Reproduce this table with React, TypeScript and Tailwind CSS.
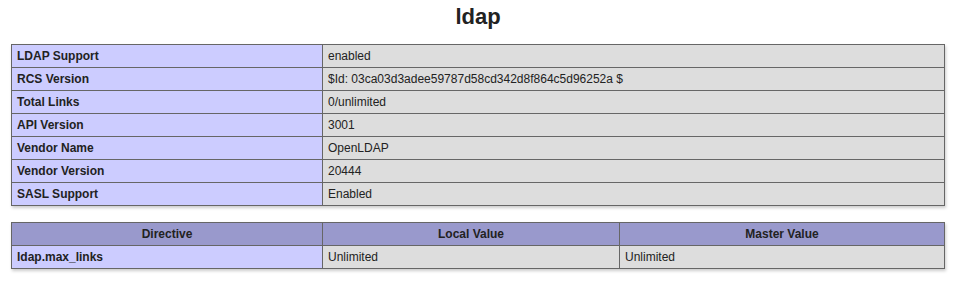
import React from 'react';

interface InfoRow {
  name: string;
  value: string;
}

const infoRows: InfoRow[] = [
  { name: 'LDAP Support', value: 'enabled' },
  { name: 'RCS Version', value: '$Id: 03ca03d3adee59787d58cd342d8f864c5d96252a $' },
  { name: 'Total Links', value: '0/unlimited' },
  { name: 'API Version', value: '3001' },
  { name: 'Vendor Name', value: 'OpenLDAP' },
  { name: 'Vendor Version', value: '20444' },
  { name: 'SASL Support', value: 'Enabled' },
];

const directives = [{ name: 'ldap.max_links', local: 'Unlimited', master: 'Unlimited' }];

const cell = 'border border-[#666] px-[5px] py-[4px] text-[12px] leading-[14px] align-baseline';

const App: React.FC = () => {
  return (
    <div
      className="min-h-screen bg-white text-[#222]"
      style={{ fontFamily: '"Liberation Sans", Arial, sans-serif' }}
    >
      <div className="flex flex-col items-center pt-[4px]">
        <h2 className="mb-[15px] text-[22px] font-bold leading-[25px]">ldap</h2>

        <table className="w-[934px] table-fixed border-collapse shadow-[1px_2px_3px_#ccc]">
          <colgroup>
            <col className="w-[311px]" />
            <col />
          </colgroup>
          <tbody>
            {infoRows.map((row) => (
              <tr key={row.name}>
                <td className={`${cell} bg-[#ccf] font-bold`}>{row.name}</td>
                <td className={`${cell} bg-[#ddd]`}>{row.value}</td>
              </tr>
            ))}
          </tbody>
        </table>

        <table className="mt-[16px] w-[934px] table-fixed border-collapse shadow-[1px_2px_3px_#ccc]">
          <colgroup>
            <col className="w-[311px]" />
            <col className="w-[297px]" />
            <col />
          </colgroup>
          <thead>
            <tr className="bg-[#99c] font-bold">
              <th className={`${cell} text-center`}>Directive</th>
              <th className={`${cell} text-center`}>Local Value</th>
              <th className={`${cell} text-center`}>Master Value</th>
            </tr>
          </thead>
          <tbody>
            {directives.map((d) => (
              <tr key={d.name}>
                <td className={`${cell} bg-[#ccf] font-bold`}>{d.name}</td>
                <td className={`${cell} bg-[#ddd]`}>{d.local}</td>
                <td className={`${cell} bg-[#ddd]`}>{d.master}</td>
              </tr>
            ))}
          </tbody>
        </table>
      </div>
    </div>
  );
};

export default App;
